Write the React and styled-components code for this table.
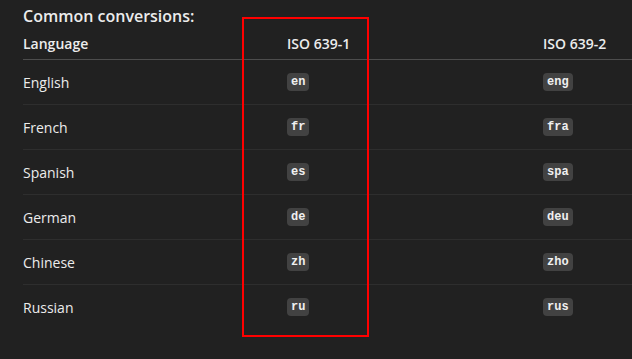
import React from 'react';
import styled, { createGlobalStyle } from 'styled-components';

const rows = [
  { lang: 'English', iso1: 'en', iso2: 'eng' },
  { lang: 'French', iso1: 'fr', iso2: 'fra' },
  { lang: 'Spanish', iso1: 'es', iso2: 'spa' },
  { lang: 'German', iso1: 'de', iso2: 'deu' },
  { lang: 'Chinese', iso1: 'zh', iso2: 'zho' },
  { lang: 'Russian', iso1: 'ru', iso2: 'rus' },
];

export default function App() {
  return (
    <>
      <Global />
      <Page>
        <Title>Common conversions:</Title>
        <Table>
          <HeadRow>
            <HeadCell>Language</HeadCell>
            <HeadCell>ISO 639-1</HeadCell>
            <HeadCell>ISO 639-2</HeadCell>
          </HeadRow>
          {rows.map((r, i) => (
            <Row key={r.lang} last={i === rows.length - 1}>
              <Cell>{r.lang}</Cell>
              <Cell><Code>{r.iso1}</Code></Cell>
              <Cell><Code>{r.iso2}</Code></Cell>
            </Row>
          ))}
        </Table>
        <Highlight />
      </Page>
    </>
  );
}

const Global = createGlobalStyle`
  html, body {
    margin: 0;
    background: #212121;
    overflow: hidden;
  }
`;

const Page = styled.div`
  position: relative;
  width: 632px;
  height: 359px;
  box-sizing: border-box;
  padding: 5px 0 0 23px;
  color: #ececec;
  font-family: "Open Sans", "Noto Sans", sans-serif;
`;

const Title = styled.div`
  font-size: 16px;
  font-weight: 600;
  line-height: 22px;
`;

const Table = styled.div`
  display: flex;
  flex-direction: column;
`;

const HeadRow = styled.div`
  display: grid;
  grid-template-columns: 264px 256px 1fr;
  height: 32px;
  align-items: center;
  border-bottom: 1px solid #4d4d4d;
`;

const Row = styled.div`
  display: grid;
  grid-template-columns: 264px 256px 1fr;
  height: 45px;
  box-sizing: border-box;
  align-items: center;
  border-bottom: 1px solid ${p => (p.last ? 'transparent' : '#2e2e2e')};
`;

const HeadCell = styled.div`
  font-size: 14px;
  font-weight: 600;
`;

const Cell = styled.div`
  font-size: 14px;
  display: flex;
  align-items: center;
`;

const Code = styled.span`
  display: inline-block;
  background: #424242;
  color: #f0f0f0;
  border-radius: 4px;
  padding: 0 4px;
  height: 18px;
  line-height: 18px;
  font-family: "Liberation Mono", "DejaVu Sans Mono", monospace;
  font-size: 12px;
  font-weight: 600;
`;

const Highlight = styled.div`
  position: absolute;
  left: 242px;
  top: 17px;
  width: 127px;
  height: 320px;
  box-sizing: border-box;
  border: 2px solid #ff0000;
  pointer-events: none;
`;
